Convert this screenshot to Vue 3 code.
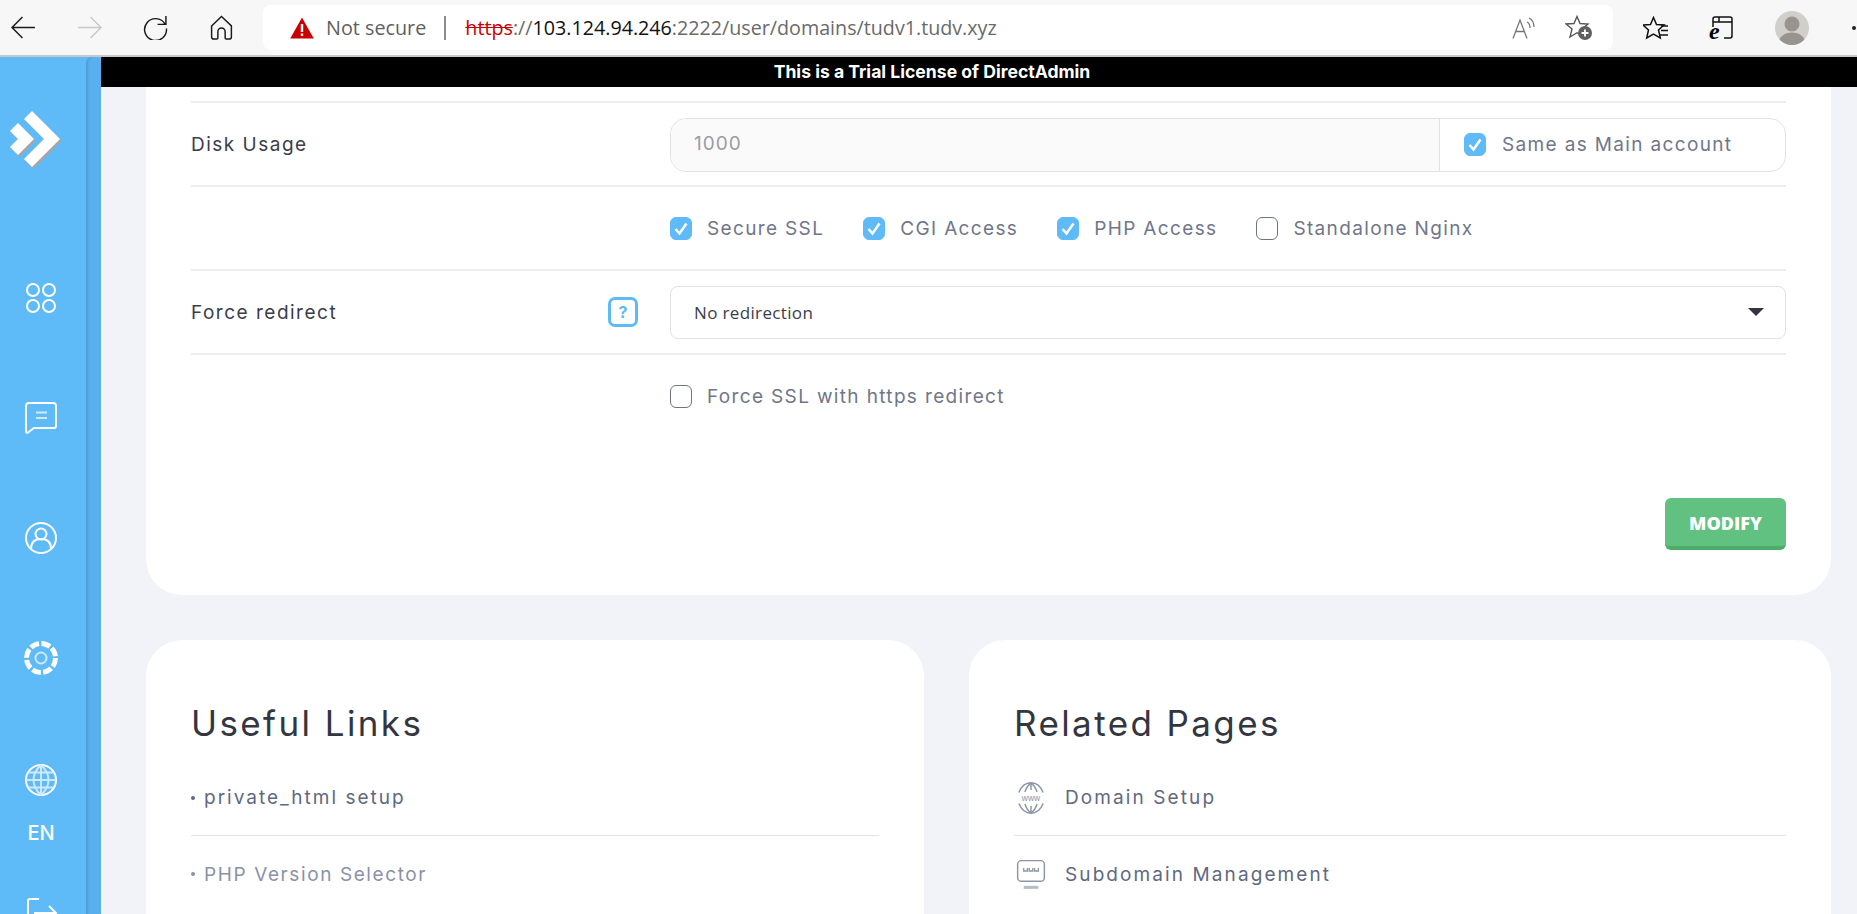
<template>
  <div class="page">
    <!-- browser toolbar -->
    <div class="toolbar">
      <div class="nav">
        <svg class="nav-icon" viewBox="0 0 24 24"><path d="M23 12H1M11 2 1 12l10 10" /></svg>
        <svg class="nav-icon off" viewBox="0 0 24 24"><path d="M1 12h22M13 2l10 10-10 10" /></svg>
        <svg class="nav-icon" viewBox="0 0 24 24"><path d="M21 8.500A10.500 10.500 0 1 0 22.500 13M22 1v8h-8" /></svg>
        <svg class="nav-icon" viewBox="0 0 24 24"><path d="M2.500 10.500 12 1.500l9.500 9V21a2 2 0 0 1-2 2h-3a1 1 0 0 1-1-1v-6a3.500 3.500 0 0 0-7 0v6a1 1 0 0 1-1 1h-3a2 2 0 0 1-2-2z" /></svg>
      </div>
      <div class="address">
        <svg class="warn" viewBox="0 0 24 22"><path d="M12 0.500 23.800 21.500H0.200z" fill="#c80000" /><rect x="10.800" y="7" width="2.400" height="8" fill="#fff" /><rect x="10.800" y="16.500" width="2.400" height="2.400" fill="#fff" /></svg>
        <span class="not-secure">Not secure</span>
        <span class="sep"></span>
        <span class="url"><s class="proto">https</s><span class="dim">://</span>103.124.94.246<span class="dim">:2222/user/domains/tudv1.tudv.xyz</span></span>
        <div class="address-end">
          <svg class="read" viewBox="0 0 24 22"><path d="M1 21.500 8 3l7 18.500M4 14.500h8.500M15 5c2 1 3 3 3 6M17 1c3 1.500 5 4.500 5 9" /></svg>
          <svg class="fav" viewBox="0 0 27 25"><path d="M12 1.500 15 8.500l8 .5-6 5 2 8-7-4.300L5 22l2-8-6-5 8-.5z" /><circle cx="20" cy="18" r="7" fill="#5f5f5f" stroke="none" /><path d="M20 14.500v7M16.500 18h7" stroke="#fff" stroke-width="1.800" /></svg>
        </div>
      </div>
      <div class="tools">
        <svg class="tool-star" viewBox="0 0 26 24"><path d="M10.500 1.500 13.500 8.500l7.500.5-5.500 5 1.800 8-6.800-4-6.800 4 1.800-8-5.500-5 7.500-.5z" /><path d="M18 10h7M18 14.500h7M17 19h8" /></svg>
        <svg class="tool-ie" viewBox="0 0 24 26"><path d="M3 12V4a2 2 0 0 1 2-2h15a2 2 0 0 1 2 2v17a2 2 0 0 1-2 2h-6M3 7h19M9 2v5" /><text x="-1" y="24" class="ie-letter">e</text></svg>
        <div class="avatar">
          <svg viewBox="0 0 34 34"><circle cx="17" cy="13" r="7.500" fill="#97938e" /><path d="M3 34c1-9 7-12.500 14-12.500S30 25 31 34z" fill="#97938e" /></svg>
        </div>
        <span class="more"></span>
      </div>
    </div>

    <div class="body">
      <!-- side menu -->
      <aside class="sidebar">
        <div class="menu">
          <svg class="logo" viewBox="0 0 52 60">
            <g fill="#a5a5a5" transform="translate(1.500 2)">
              <path d="M14 8 22 0l28 28-28 28-8-8 20-20z" />
              <path d="M0 20 8 12l16 16-16 16-8-8 8-8z" />
            </g>
            <g fill="#fff">
              <path d="M14 8 22 0l28 28-28 28-8-8 20-20z" />
              <path d="M0 20 8 12l16 16-16 16-8-8 8-8z" />
            </g>
          </svg>
          <svg class="menu-icon first" viewBox="0 0 34 34">
            <circle cx="9" cy="9" r="6" /><circle cx="25" cy="9" r="6" />
            <circle cx="9" cy="25" r="6" /><circle cx="25" cy="25" r="6" />
          </svg>
          <svg class="menu-icon" viewBox="0 0 34 34">
            <path d="M2 5a3 3 0 0 1 3-3h24a3 3 0 0 1 3 3v20a2 2 0 0 1-2 2H10l-6 4.500c-1 .5-2 0-2-1z" />
            <path class="soft" d="M12 11.500h11M12 17h11" />
          </svg>
          <svg class="menu-icon" viewBox="0 0 34 34">
            <circle cx="17" cy="17" r="15" />
            <circle cx="17" cy="13" r="5.500" />
            <path d="M7 28c0-7 3-10 10-10s10 3 10 10" />
          </svg>
          <svg class="menu-icon gear" viewBox="0 0 38 38">
            <circle cx="19" cy="19" r="14.500" stroke-width="5" stroke-dasharray="9 2.390" />
            <circle class="soft" cx="19" cy="19" r="5.500" />
          </svg>
          <svg class="menu-icon" viewBox="0 0 34 34">
            <circle cx="17" cy="17" r="15" />
            <path class="soft" d="M17 2c-10 9-10 21 0 30M17 2c10 9 10 21 0 30M17 2v30M2 17h30M4.500 9.500h25M4.500 24.500h25" />
          </svg>
          <span class="lang">EN</span>
          <svg class="menu-icon logout" viewBox="0 0 34 34">
            <path d="M15 3H6a2 2 0 0 0-2 2v24a2 2 0 0 0 2 2h9M10 17h22M25 10l7 7-7 7" />
          </svg>
        </div>
        <div class="handle"></div>
      </aside>

      <div class="content">
        <div class="trial">This is a Trial License of DirectAdmin</div>
        <div class="scroll">
          <section class="card main-card">
            <div class="row">
              <label class="row-label">Disk Usage</label>
              <div class="input-group">
                <div class="input-disabled">1000</div>
                <div class="addon">
                  <span class="check on"><svg viewBox="0 0 22 23"><path d="M5.500 12l4 4.500 7-10" /></svg></span>
                  <span class="check-text">Same as Main account</span>
                </div>
              </div>
            </div>
            <div class="row">
              <span class="row-label"></span>
              <div class="checks">
                <label v-for="item in options" :key="item.name" class="check-item">
                  <span class="check" :class="{ on: item.on }"><svg v-if="item.on" viewBox="0 0 22 23"><path d="M5.500 12l4 4.500 7-10" /></svg></span>
                  <span class="check-text">{{ item.name }}</span>
                </label>
              </div>
            </div>
            <div class="row">
              <label class="row-label">Force redirect</label>
              <div class="help-cell"><span class="help">?</span></div>
              <div class="select">
                <span>No redirection</span>
                <span class="caret"></span>
              </div>
            </div>
            <div class="row last">
              <span class="row-label"></span>
              <label class="check-item">
                <span class="check"></span>
                <span class="check-text">Force SSL with https redirect</span>
              </label>
            </div>
            <div class="actions">
              <button class="modify">MODIFY</button>
            </div>
          </section>

          <div class="bottom">
            <section class="card links">
              <h2>Useful Links</h2>
              <a class="link-row"><i class="dot"></i>private_html setup</a>
              <a class="link-row muted"><i class="dot"></i>PHP Version Selector</a>
            </section>
            <section class="card related">
              <h2>Related Pages</h2>
              <a class="link-row icon-row">
                <svg class="link-icon" viewBox="0 0 28 28">
                  <path d="M4 9.500C6 4.500 10 1.500 14 1.500s8 3 10 8M4 18.500c2 5 6 8 10 8s8-3 10-8M14 1.500v6M14 20.500v6M9 9c1-3 3-6 5-7.500 2 1.500 4 4.500 5 7.500M9 19c1 3 3 6 5 7.500 2-1.500 4-4.500 5-7.500" />
                  <text x="14" y="16.500" class="www">www</text>
                </svg>
                <span>Domain Setup</span>
              </a>
              <a class="link-row icon-row">
                <svg class="link-icon" viewBox="0 0 28 28">
                  <rect x="3" y="3" width="22" height="17" rx="3" />
                  <path d="M8 9v2.500h3V9M12.500 9v2.500h3V9M17 9v2.500h3V9" stroke-width="1.100" />
                  <path d="M8 25h12" stroke-width="2.500" stroke="#b4bbcb" />
                </svg>
                <span>Subdomain Management</span>
              </a>
            </section>
          </div>
        </div>
      </div>
    </div>
  </div>
</template>

<script setup>
const options = [
  { name: 'Secure SSL', on: true },
  { name: 'CGI Access', on: true },
  { name: 'PHP Access', on: true },
  { name: 'Standalone Nginx', on: false }
]
</script>

<style>
html, body {
  margin: 0;
  overflow: hidden;
}
</style>

<style scoped>
.page {
  width: 1857px;
  height: 914px;
  display: flex;
  flex-direction: column;
  overflow: hidden;
  font-family: Inter, "Open Sans", sans-serif;
  background: #f1f3f8;
}

/* toolbar */
.toolbar {
  height: 57px;
  flex: none;
  box-sizing: border-box;
  display: flex;
  align-items: center;
  background: #f7f7f7;
  border-bottom: 2px solid #c8c8c8;
}
.nav {
  width: 263px;
  flex: none;
  display: flex;
  align-items: center;
  gap: 41px;
  padding-left: 11px;
  box-sizing: border-box;
}
.nav-icon {
  width: 25px;
  height: 25px;
  fill: none;
  stroke: #1a1a1a;
  stroke-width: 1.400;
}
.nav-icon.off {
  stroke: #c8c8c8;
}
.address {
  width: 1350px;
  height: 45px;
  flex: none;
  display: flex;
  align-items: center;
  background: #fff;
  border-radius: 8px;
  padding-left: 27px;
  box-sizing: border-box;
  font-family: "Open Sans", sans-serif;
  font-size: 19.700px;
}
.warn {
  width: 24px;
  height: 22px;
}
.not-secure {
  margin-left: 12px;
  color: #5f5f5f;
  font-size: 19.800px;
}
.sep {
  width: 2px;
  height: 24px;
  margin: 0 19px 0 18px;
  background: #8c8c8c;
}
.url {
  color: #111;
  white-space: nowrap;
}
.proto {
  color: #c80000;
}
.dim {
  color: #6a6a6a;
}
.address-end {
  margin-left: auto;
  display: flex;
  align-items: center;
  gap: 29px;
  padding-right: 21px;
}
.read {
  width: 24px;
  height: 22px;
  fill: none;
  stroke: #777;
  stroke-width: 1.300;
}
.fav {
  width: 27px;
  height: 25px;
  fill: none;
  stroke: #555;
  stroke-width: 1.400;
}
.tools {
  flex: 1;
  display: flex;
  align-items: center;
  padding-left: 30px;
}
.tool-star {
  width: 26px;
  height: 24px;
  fill: none;
  stroke: #111;
  stroke-width: 1.500;
}
.tool-ie {
  width: 24px;
  height: 26px;
  margin-left: 41px;
  overflow: visible;
  fill: none;
  stroke: #111;
  stroke-width: 1.500;
}
.ie-letter {
  font-family: "Liberation Serif", serif;
  font-style: italic;
  font-weight: 700;
  font-size: 24px;
  fill: #000;
  stroke: #f7f7f7;
  stroke-width: 1.500;
  paint-order: stroke;
}
.avatar {
  width: 34px;
  height: 34px;
  margin-left: 41px;
  border-radius: 50%;
  overflow: hidden;
  background: #d1cfca;
}
.avatar svg {
  display: block;
}
.more {
  width: 4px;
  height: 4px;
  margin-left: 43px;
  border-radius: 50%;
  background: #222;
}

/* layout */
.body {
  flex: 1;
  display: flex;
  min-height: 0;
}
.sidebar {
  width: 101px;
  flex: none;
  display: flex;
  background: #5fbaf8;
  overflow: hidden;
}
.menu {
  width: 86px;
  padding-right: 4px;
  box-sizing: border-box;
  flex: none;
  display: flex;
  flex-direction: column;
  align-items: center;
}
.logo {
  width: 52px;
  height: 60px;
  margin: 54px 0 0 -11px;
  flex: none;
}
.menu-icon {
  width: 34px;
  height: 34px;
  margin-top: 86px;
  flex: none;
  fill: none;
  stroke: #fff;
  stroke-width: 2;
}
.menu-icon.first {
  margin-top: 110px;
}
.menu-icon.gear {
  width: 38px;
  height: 38px;
  margin-top: 84px;
}
.menu-icon .soft {
  stroke: #cfe9fc;
}
.lang {
  margin-top: 25px;
  color: #fff;
  font-size: 20px;
  font-weight: 500;
  line-height: 22px;
}
.menu-icon.logout {
  margin-top: 52px;
}
.handle {
  width: 15px;
  height: 100%;
  background: #5ab0ee;
  border-left: 1px solid #4f9dd6;
  border-radius: 6px 6px 0 0;
  box-shadow: inset 2px 0 2px -1px #4f9dd6;
  box-sizing: border-box;
}
.content {
  flex: 1;
  min-width: 0;
  display: flex;
  flex-direction: column;
}
.trial {
  height: 30px;
  flex: none;
  padding-right: 94px;
  background: #000;
  color: #fff;
  text-align: center;
  font-size: 17.600px;
  font-weight: 700;
  line-height: 30px;
}
.scroll {
  flex: 1;
  padding: 0 26px 0 45px;
  display: flex;
  flex-direction: column;
  gap: 45px;
  overflow: hidden;
}

/* cards */
.card {
  background: #fff;
  border-radius: 36px;
  padding: 0 45px;
  flex: none;
}
.main-card {
  border-radius: 0 0 36px 36px;
  padding-top: 14px;
  height: 508px;
  box-sizing: border-box;
}
.row {
  height: 84px;
  display: flex;
  align-items: center;
  border-top: 2px solid #ececee;
  box-sizing: border-box;
}
.row-label {
  width: 479px;
  flex: none;
  color: #3a3d4a;
  font-size: 19px;
  font-weight: 400;
  letter-spacing: 1.500px;
}
.help-cell {
  width: 0;
  position: relative;
}
.help {
  position: absolute;
  left: -62px;
  top: -15px;
  width: 30px;
  height: 30px;
  box-sizing: border-box;
  border: 3px solid #5fbaf8;
  border-radius: 7px;
  color: #5fbaf8;
  font-size: 16px;
  font-weight: 700;
  line-height: 24px;
  text-align: center;
}
.input-group {
  flex: 1;
  height: 52px;
  margin-top: 1px;
  display: flex;
  border: 1px solid #e2e2e4;
  border-radius: 16px;
  overflow: hidden;
}
.input-disabled {
  width: 769px;
  flex: none;
  padding-left: 23px;
  box-sizing: border-box;
  background: #fafafa;
  border-right: 1px solid #e2e2e4;
  color: #9a9ca4;
  font-size: 19px;
  letter-spacing: 1px;
  line-height: 50px;
}
.addon {
  flex: 1;
  display: flex;
  align-items: center;
  gap: 16px;
  padding-left: 24px;
}
.checks {
  display: flex;
  align-items: center;
  gap: 39px;
}
.check-item {
  display: flex;
  align-items: center;
  gap: 15px;
}
.check {
  width: 22px;
  height: 23px;
  flex: none;
  box-sizing: border-box;
  border: 1px solid #6f7484;
  border-radius: 6px;
}
.check.on {
  background: #5fbaf8;
  border-color: #5fbaf8;
}
.check svg {
  display: block;
  width: 22px;
  height: 23px;
  margin: -1px;
  fill: none;
  stroke: #fff;
  stroke-width: 2.500;
}
.check-text {
  color: #70768a;
  font-size: 19px;
  letter-spacing: 1.350px;
  white-space: nowrap;
}
.select {
  flex: 1;
  height: 53px;
  display: flex;
  align-items: center;
  justify-content: space-between;
  padding: 0 21px 0 23px;
  box-sizing: border-box;
  border: 1px solid #e2e2e4;
  border-radius: 8px;
  color: #3a3d4a;
  font-family: "Open Sans", sans-serif;
  font-size: 17px;
  letter-spacing: .35px;
}
.caret {
  width: 0;
  height: 0;
  border-left: 8px solid transparent;
  border-right: 8px solid transparent;
  border-top: 8px solid #33353c;
}
.actions {
  display: flex;
  justify-content: flex-end;
  margin-top: 61px;
}
.modify {
  width: 121px;
  height: 52px;
  border: none;
  border-bottom: 4px solid #4cad68;
  border-radius: 6px;
  background: #60c180;
  color: #fff;
  font-family: "Open Sans", sans-serif;
  font-size: 18px;
  font-weight: 800;
  padding: 2px 0 0;
}
.bottom {
  display: flex;
  gap: 45px;
  align-items: flex-start;
}
.links {
  width: 778px;
  height: 400px;
  box-sizing: border-box;
  flex: none;
}
.related {
  flex: 1;
  height: 400px;
  box-sizing: border-box;
}
.card h2 {
  margin: 63px 0 17px;
  color: #33363f;
  font-size: 35px;
  font-weight: 400;
  line-height: 40px;
  letter-spacing: 2.400px;
}
.link-row {
  height: 76px;
  display: flex;
  align-items: center;
  color: #5f6880;
  font-size: 19px;
  font-weight: 400;
  letter-spacing: 2px;
  box-sizing: border-box;
}
.link-row:not(:last-child) {
  border-bottom: 1px solid #dfe2ea;
}
.link-row.muted {
  color: #8a92a6;
  letter-spacing: 1.600px;
}
.dot {
  width: 4px;
  height: 4px;
  margin-right: 9px;
  border-radius: 50%;
  background: currentColor;
}
.icon-row {
  gap: 17px;
  letter-spacing: 2.100px;
}
.link-icon {
  width: 34px;
  height: 34px;
  fill: none;
  stroke: #8d95a8;
  stroke-width: 1.200;
}
.www {
  font-family: "Liberation Sans", sans-serif;
  font-size: 7px;
  text-anchor: middle;
  letter-spacing: 0;
  fill: #8d95a8;
  stroke: none;
}
</style>
